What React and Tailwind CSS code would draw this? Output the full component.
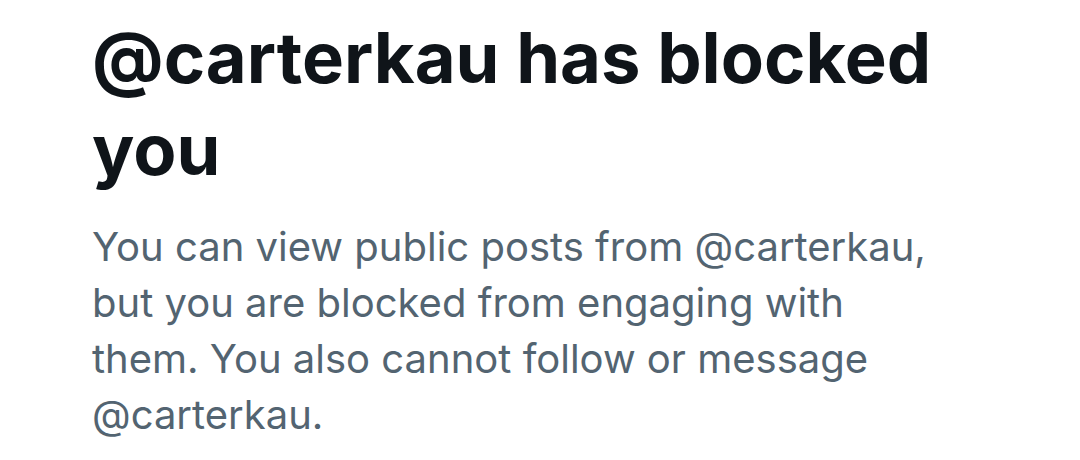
export default function App() {
  return (
    <div className="w-[1080px] h-[460px] bg-white overflow-hidden" style={{ fontFamily: 'Inter, "Noto Sans", sans-serif' }}>
      <div className="w-[992px] pl-[92px] pt-[12px]">
        <h1 className="text-[70.5px] leading-[92px] font-bold text-[#0f1419]">
          @carterkau has blocked you
        </h1>
        <p className="mt-[23px] w-[850px] text-[40px] leading-[56px] text-[#536471]">
          You can view public posts from @carterkau, but you are blocked from engaging with them. You also cannot follow or message @carterkau.
        </p>
      </div>
    </div>
  );
}
